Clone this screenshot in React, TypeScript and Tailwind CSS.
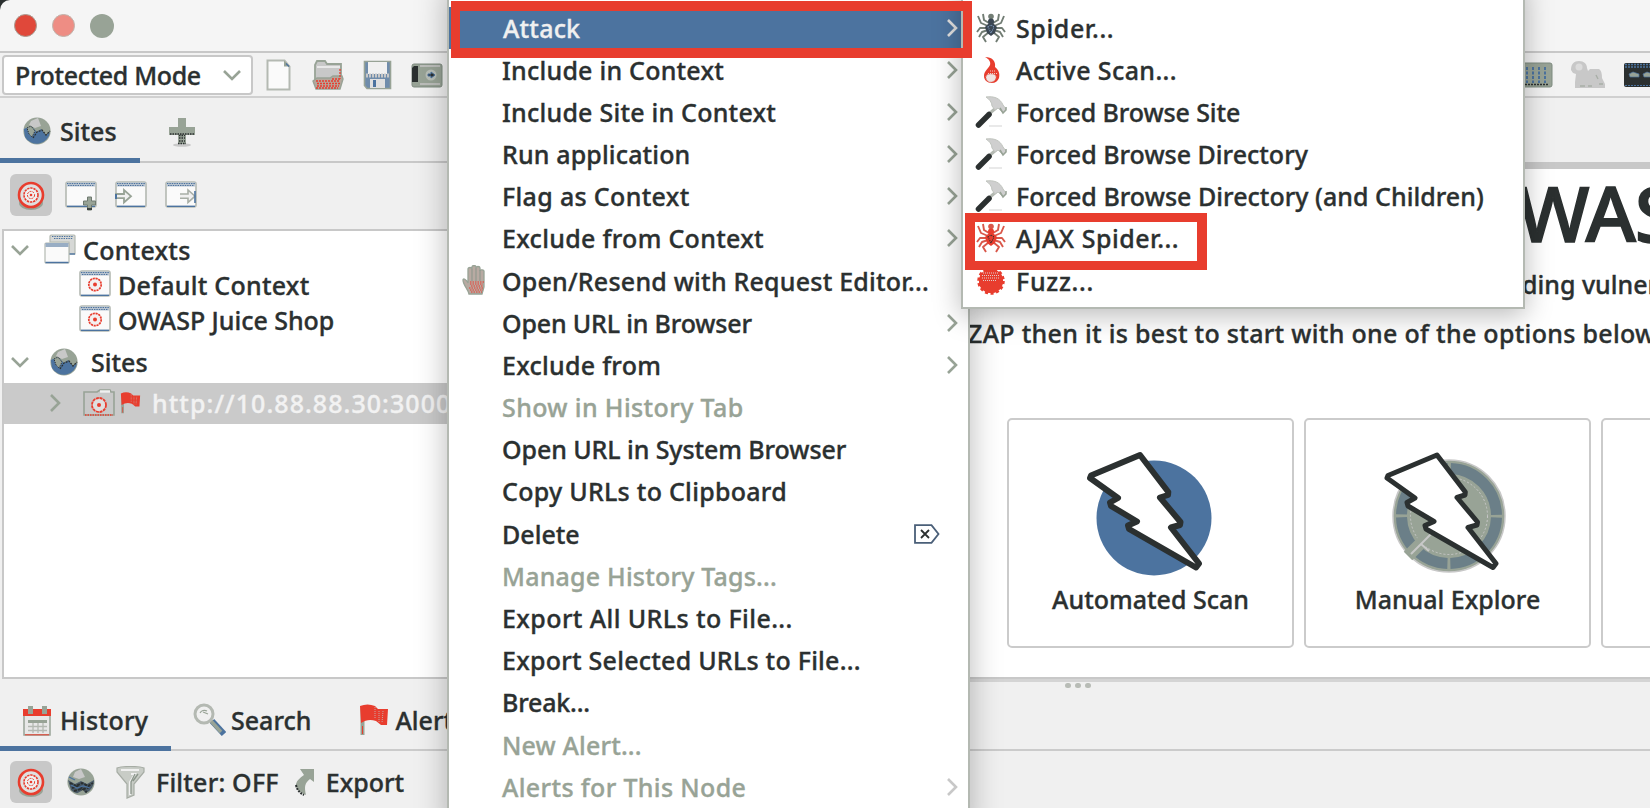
import React from "react";

type IconProps = { className?: string };

const Globe = ({ className = "" }: IconProps) => (
  <svg viewBox="0 0 28 28" className={`h-7 w-7 shrink-0 ${className}`}>
    <circle cx="14" cy="14" r="13.6" fill="#98a396" />
    <path d="M0.8 12 L8 9 L14 15 L18 12 L23 18 L27 15 A13.4 13.4 0 0 1 2 20Z" fill="#4c739f" />
    <path d="M8 4 L15 1 L18 9 L12 11 L6 8Z" fill="#c8c8c8" />
    <path d="M4 11 L8 9 L12 14 L9 20 L6 17Z" fill="#98a396" stroke="#2b3030" strokeWidth="1" strokeDasharray="1 1" />
    <path d="M10 21 L14 15 L19 13 L23 18 L27 14" fill="none" stroke="#2b3030" strokeWidth="1.3" strokeDasharray="2 1" />
  </svg>
);

const DarkGlobe = () => (
  <svg viewBox="0 0 28 28" className="h-7 w-7 shrink-0">
    <circle cx="14" cy="14" r="13.6" fill="#98a396" />
    <path d="M1 12 L8 16 L14 13 L20 16 L27 12 A13.4 13.4 0 0 1 4 22Z" fill="#4a5a68" />
    <path d="M8 4 L14 1 L18 9 L12 11 L6 9Z" fill="#c8c8c8" />
    <path d="M3 15 L9 18 L15 15 L21 18 L26 15 M5 20 L11 18 L17 21 L23 19 M7 23 L14 21 L20 24" fill="none" stroke="#2b3030" strokeWidth="2" strokeDasharray="3 1" />
    <path d="M4 17 L10 20 L16 18 L23 20 M2 9 L8 12" fill="none" stroke="#4c739f" strokeWidth="1.3" />
    <path d="M9 26 L19 26 L16 22Z" fill="#98a396" />
  </svg>
);

const Target = () => (
  <svg viewBox="0 0 42 42" className="h-[42px] w-[42px]">
    <ellipse cx="21" cy="29" rx="12" ry="7" fill="#98a396" />
    <circle cx="21" cy="21" r="12" fill="#e0e0e0" stroke="#e83d2e" strokeWidth="2.6" />
    <circle cx="21" cy="21" r="7" fill="#f0f0f0" stroke="#e83d2e" strokeWidth="1.6" strokeDasharray="2.4 .8" />
    <circle cx="21" cy="21" r="3.6" fill="none" stroke="#e83d2e" strokeWidth="1" strokeDasharray="2 1" />
    <circle cx="21" cy="21" r="1.3" fill="#e83d2e" />
  </svg>
);

const WindowBase = () => (
  <>
    <rect x="1" y="1" width="30" height="25" rx="2" fill="#fafafa" stroke="#b4b9b2" strokeWidth="1.6" />
    <path d="M1.5 1.5h29v4h-29z" fill="#b9c4d0" />
    <path d="M2 2.5h28M3 4.5h26" stroke="#4c739f" strokeWidth="1.2" strokeDasharray="1.4 1" />
    <path d="M2 25.3h28" stroke="#4c739f" strokeWidth="1.4" />
  </>
);

const WindowPlus = () => (
  <svg viewBox="0 0 33 30" className="h-[30px] w-[33px]">
    <WindowBase />
    <path d="M22.5 16h4v4h4v4h-4v5h-4v-5h-4v-4h4z" fill="#98a396" stroke="#6f7a70" strokeWidth="1" />
    <path d="M22 28h5" stroke="#2b3030" strokeWidth="1.6" />
  </svg>
);
const WindowIn = () => (
  <svg viewBox="0 0 33 30" className="h-[30px] w-[33px]">
    <WindowBase />
    <path d="M1 13h8V9l7 6.2-7 6.3v-4.3H1z" fill="#f0f0f0" stroke="#98a396" strokeWidth="1.8" />
    <path d="M1 13v5" stroke="#4c739f" strokeWidth="2" />
  </svg>
);
const WindowOut = () => (
  <svg viewBox="0 0 33 30" className="h-[30px] w-[33px]">
    <WindowBase />
    <path d="M15 13h8V9l7 6.2-7 6.3v-4.3h-8" fill="#f0f0f0" stroke="#a8aea6" strokeWidth="1.6" />
    <path d="M30 10v12" stroke="#4c739f" strokeWidth="1.6" />
  </svg>
);
const WindowTarget = () => (
  <svg viewBox="0 0 32 27" className="h-[27px] w-8 shrink-0">
    <WindowBase />
    <circle cx="16" cy="14.5" r="6.2" fill="#f4f0f0" stroke="#e83d2e" strokeWidth="1.7" strokeDasharray="2.2 .7" />
    <circle cx="16" cy="14.5" r="2" fill="#e83d2e" />
  </svg>
);
const WindowStack = () => (
  <svg viewBox="0 0 32 30" className="h-[30px] w-8 shrink-0">
    <path d="M7 1h23a1 1 0 0 1 1 1v18h-6V8H6V2z" fill="#d6d8d6" stroke="#b4b9b2" strokeWidth="1.2" />
    <path d="M8 2.5h21M10 4.5h19" stroke="#4c739f" strokeWidth="1.2" strokeDasharray="1.4 1" />
    <path d="M25 20h6" stroke="#4c739f" strokeWidth="1.4" />
    <rect x="1" y="9" width="24" height="20" rx="1" fill="#fafafa" stroke="#b4b9b2" strokeWidth="1.2" />
    <path d="M1.5 9h23v4h-23z" fill="#98adc4" />
    <path d="M1.5 28.5h23" stroke="#4c739f" strokeWidth="1.5" />
  </svg>
);
const FolderTarget = () => (
  <svg viewBox="0 0 32 28" className="h-7 w-8 shrink-0">
    <path d="M1 3h13l3-2h10l1 2h3v23H1z" fill="#c8c8c8" stroke="#98a396" strokeWidth="1.6" />
    <path d="M17 2.5h10" stroke="#f0f0f0" strokeWidth="2.4" />
    <path d="M2 26h28" stroke="#e83d2e" strokeWidth="1.4" strokeDasharray="1.5 1" />
    <circle cx="16" cy="16" r="7" fill="#e0e0e0" stroke="#e83d2e" strokeWidth="1.8" strokeDasharray="3 .7" />
    <circle cx="16" cy="16" r="2" fill="#e83d2e" />
  </svg>
);
const Flag = ({ className = "" }: IconProps) => (
  <svg viewBox="0 0 30 32" className={`shrink-0 ${className}`}>
    <path d="M1.5 3v28h4V18z" fill="#98a396" />
    <path d="M3.5 22v8" stroke="#e83d2e" strokeWidth="1" />
    <path d="M1 2 C6 0 11 0 16 2 L19 5 L29 5 L28 21 L22 21 L17 17 C11 15 7 16 2 19Z" fill="#e83d2e" />
    <path d="M20 7v12M24 7l-1 12M16 3v12" stroke="#c8a8a2" strokeWidth="1" strokeDasharray="1 1" />
  </svg>
);
const Chevron = ({ className = "", dir }: IconProps & { dir: "down" | "right" }) => (
  <svg viewBox="0 0 20 20" className={`h-5 w-5 shrink-0 ${className}`} fill="none" stroke="currentColor" strokeWidth="2.6">
    <path d={dir === "down" ? "M2 6l8 8 8-8" : "M6 2l8 8-8 8"} />
  </svg>
);

const DocIcon = () => (
  <svg viewBox="0 0 25 32" className="h-8 w-[25px]">
    <path d="M1.5 1.5h17l5 6v23h-22z" fill="#fafafa" stroke="#b4b9b2" strokeWidth="2" />
    <path d="M18 1.5v6h6z" fill="#98a396" />
    <path d="M20 4.5l3 3" stroke="#4c739f" strokeWidth="1.3" />
  </svg>
);
const FolderIcon = () => (
  <svg viewBox="0 0 32 32" className="h-8 w-8">
    <path d="M3 6l2-4h8l2 3h14v17H3z" fill="#c8c8c8" stroke="#98a396" strokeWidth="1.8" />
    <path d="M5 8h23" stroke="#f0f0f0" strokeWidth="1.6" />
    <path d="M1 22l4-3h13l3-2h9l1 3-3 10H4z" fill="#b5a79c" stroke="#98a396" strokeWidth="1.4" />
    <path d="M4 22h24M5 24.5h23M5 27h22M20 20h8M28 10v10M4 29h22" stroke="#e83d2e" strokeWidth="1.3" strokeDasharray="2 1" />
  </svg>
);
const FloppyIcon = () => (
  <svg viewBox="0 0 29 30" className="h-[30px] w-[29px]">
    <path d="M1.5 1.5h26v27H4l-2.5-3z" fill="#6f8cab" stroke="#98a396" strokeWidth="1.6" />
    <path d="M5 2h19v12H5z" fill="#f0f0f0" />
    <path d="M3 15.500h23" stroke="#c8c8c8" strokeWidth="4" strokeDasharray="2 1" />
    <path d="M7 19h15v9H7z" fill="#e0e0e0" />
    <path d="M10 20h3v7h-3z" fill="#4c739f" />
  </svg>
);
const CameraIcon = () => (
  <svg viewBox="0 0 32 26" className="h-[26px] w-8">
    <rect x="1" y="2" width="30" height="23" rx="2" fill="#98a396" stroke="#7f8b80" />
    <path d="M1 6l2-2h4v16H1z" fill="#2b3030" />
    <path d="M9 4h20M9 22h20" stroke="#c8c8c8" strokeWidth="1.5" />
    <circle cx="20" cy="13" r="5.500" fill="#b9bfb8" />
    <path d="M17 12h3v-2l4 3-4 3v-2h-3z" fill="#2b3030" stroke="#4c739f" strokeWidth="1" />
  </svg>
);
const PlusIcon = () => (
  <svg viewBox="0 0 30 30" className="h-[30px] w-[30px]">
    <ellipse cx="15" cy="28" rx="9" ry="1.8" fill="#c8c8c8" />
    <path d="M11 1h8v9h9v8h-9v9h-8v-9H2v-8h9z" fill="#98a396" />
    <path d="M3 17h24M12 18.5h6M12 21h6M12 24h6M11 26.5h8" stroke="#2b3030" strokeWidth="1.3" strokeDasharray="1.5 1" />
  </svg>
);
const CalendarIcon = () => (
  <svg viewBox="0 0 30 32" className="h-8 w-[30px] shrink-0">
    <path d="M2 11v20h26V11z" fill="#e8e8e8" stroke="#98a396" strokeWidth="1.500" />
    <path d="M1 5h28v7H1z" fill="#e83d2e" />
    <path d="M6 2h5v8H6zM20 2h5v8h-5z" fill="#98a396" />
    <path d="M6 16h19v3H6z" fill="#98a396" />
    <path d="M6 22.5h19M6 26.5h19M11 19v10M16 19v10M21 19v10" stroke="#b4b9b2" strokeWidth="1.3" />
    <path d="M3 30.8h24" stroke="#e83d2e" strokeWidth="1" />
  </svg>
);
const SearchIcon = () => (
  <svg viewBox="0 0 33 33" className="h-[33px] w-[33px] shrink-0">
    <path d="M19 18l12 13" stroke="#4c739f" strokeWidth="6" />
    <path d="M17 17l11 12" stroke="#98a396" strokeWidth="3.5" />
    <circle cx="11" cy="11" r="9" fill="#f0f0f0" stroke="#b4b9b2" strokeWidth="3" />
    <path d="M7 10a5 5 0 0 1 7-2M10 9l5 2" fill="none" stroke="#98a396" strokeWidth="1.2" />
  </svg>
);
const FunnelIcon = () => (
  <svg viewBox="0 0 29 33" className="h-[33px] w-[29px] shrink-0">
    <path d="M1 2c6-2 21-2 27 0v4L18 18v11l-7 3V18L1 6z" fill="#c8ccc6" stroke="#a6aca4" strokeWidth="1.2" />
    <path d="M5 4h18M15 8l4 0-5 8v13" fill="none" stroke="#f0f0f0" strokeWidth="2" />
    <path d="M19 8l-4 8v12M22 8l-5 7" fill="none" stroke="#8a958a" strokeWidth="1.3" />
  </svg>
);
const ExportIcon = () => (
  <svg viewBox="0 0 20 30" className="h-[30px] w-5 shrink-0">
    <path d="M5 2h14v13l-4-3c-5 4-6 7-4 16C4 25 0 21 1 17c1-4 4-6 8-9z" fill="#98a396" />
    <path d="M1 18c1 5 4 8 8 10" fill="none" stroke="#2b3030" strokeWidth="2" strokeDasharray="2 1" />
  </svg>
);
const HandIcon = () => (
  <svg viewBox="0 0 25 31" className="h-[31px] w-[25px]">
    <path d="M7 29c-1-5-6-9-6-14 0-2 3-1 5 3V4c0-2 4-2 4 0V2c0-2 4-2 4 0v1c0-2 4-2 4 0v3c0-2 4-1 4 0v16l-2 7z" fill="#b8aaa2" stroke="#98a396" strokeWidth="1.3" />
    <path d="M10 4v12M14 3v13M18 5v11" stroke="#8a958a" strokeWidth="1" />
    <path d="M8 17h14M8 19h13M9 21h12M7 23h14M8 25h13M9 27h11" stroke="#e83d2e" strokeWidth="1.2" strokeDasharray="1.5 1" />
  </svg>
);
const Spider = ({ body, leg, mark }: { body: string; leg: string; mark: string }) => (
  <svg viewBox="0 0 30 30" className="h-[30px] w-[30px]">
    <g fill="none" stroke={leg} strokeWidth="1.9" strokeLinejoin="round">
      <path d="M13 10L8 7 7 1M17 10l5-3 1-6M12 13L5 10 2 3M18 13l7-3 3-7M12 15l-8 0-3 4M18 15l8 0 3 4M12 17l-6 2-3 5M18 17l6 2 3 5M13 19l-6 5 3 5M17 19l6 5-3 5" />
    </g>
    <circle cx="15" cy="3.5" r="2.8" fill={leg} />
    <ellipse cx="15" cy="8.5" rx="3" ry="3" fill={body} />
    <path d="M15 8l6 6-2 6-4 3-4-3-2-6z" fill={body} />
    <path d="M12 14l3-2 3 2-3 6z" fill="none" stroke={mark} strokeWidth="1.1" strokeDasharray="1 1" />
  </svg>
);
const Flame = () => (
  <svg viewBox="0 0 18 28" className="h-7 w-[18px]">
    <path d="M3 1c7 0 11 4 10 10 4 3 5 7 4 11-1 3-4 5-7 5-5 0-8-3-8-7 0-5 4-7 6-11 1-3-1-6-5-8z" fill="#e83d2e" />
    <path d="M4 21c0-2 2-3 5-3s5 1 5 3-2 5-5 5-5-2-5-5z" fill="#f0e4e2" stroke="#d9a098" strokeWidth="1" strokeDasharray="1 1" />
    <path d="M8 15h6M6 17.500h9" stroke="#f0c8c2" strokeWidth="1" strokeDasharray="1 1" />
  </svg>
);
const HammerIcon = () => (
  <svg viewBox="0 0 32 32" className="h-8 w-8">
    <path d="M14 30h13" stroke="#e4e4e4" strokeWidth="1.6" />
    <path d="M14 18l8-7" stroke="#b4b9b2" strokeWidth="3" />
    <path d="M3.5 29L14 18.500" stroke="#2b3030" strokeWidth="5.500" strokeLinecap="round" />
    <path d="M11 1c8-1 14 1 17 8l3 4-3 4-5-5-3 2-3-4c0-4-3-7-6-9z" fill="#cfcfcf" stroke="#c0c4be" />
    <path d="M25 12l3 5 3-3v-3" fill="none" stroke="#98a396" strokeWidth="1.5" />
  </svg>
);
const FuzzIcon = () => (
  <svg viewBox="0 0 30 30" className="h-[30px] w-[30px]">
    <circle cx="15" cy="15" r="12" fill="#e83d2e" stroke="#e83d2e" strokeWidth="3.5" strokeDasharray="3 2.4" />
    <circle cx="15" cy="15" r="12" fill="#e83d2e" />
    <path d="M7 7h16M6 9.5h18M6 12h17M7 14.5h14" stroke="#e0cfcb" strokeWidth="1" strokeDasharray="1 1" />
  </svg>
);
const DeleteKey = () => (
  <svg viewBox="0 0 26 20" className="h-5 w-[26px]" fill="none" stroke="#4a5f78" strokeWidth="1.8">
    <path d="M1 1.2h16.5l7 8.8-7 8.8H1z" />
    <path d="M7 6l8 8M15 6l-8 8" stroke="#2b3030" />
  </svg>
);
const BoardIcon = () => (
  <svg viewBox="0 0 28 26" className="h-[26px] w-7">
    <rect x="-6" y="1" width="33" height="24" rx="2" fill="#98a396" stroke="#7f8b80" />
    <path d="M2 5v16M8 5v16M14 5v16M20 5v16" stroke="#4c739f" strokeWidth="2" strokeDasharray="3 1.5" />
    <path d="M0 22.5h24" stroke="#2b3030" strokeWidth="1.4" strokeDasharray="2 1" />
  </svg>
);
const CritterIcon = () => (
  <svg viewBox="0 0 36 29" className="h-[29px] w-9">
    <path d="M1 10c0-6 3-9 8-9s8 3 8 7l1 3 2-2h9c2 1 3 4 3 9l3 6v4H5v-6l1-8-3-1z" fill="#c8c8c8" />
    <circle cx="9" cy="7" r="3.5" fill="#dcdcdc" />
    <path d="M10 26h5M18 26h4M26 15l2 4M29 24h4" stroke="#a8aea6" strokeWidth="1.4" />
  </svg>
);
const MaskIcon = () => (
  <svg viewBox="0 0 32 26" className="h-[26px] w-8 shrink-0">
    <rect x="1" y="1" width="36" height="24" rx="2" fill="#2b3030" />
    <path d="M2 2.5h30M2 5h30" stroke="#4c739f" strokeWidth="1.6" strokeDasharray="2 1" />
    <path d="M2 23.5h30" stroke="#4c739f" strokeWidth="1" strokeDasharray="2 1" />
    <path d="M6 12l4-2 6 2v3H7zM20 12l4-2 6 2v3h-9z" fill="#98a396" stroke="#4c739f" strokeWidth=".7" />
  </svg>
);

const Bolt = ({ width }: { width: number }) => (
  <path
    d="M-11 -61 L-60 -40.500 L-61 -38 L-33 -18 L-41 -13.500 L-40 -10 L-14 5.500 L-23 9.500 L-22 13 L45 51.500 L48 47.500 L20 11.500 L29 9 L29.500 6 L9 -18.500 L17 -21 L17.300 -24 Z"
    fill="#fff"
    stroke="#2b3030"
    strokeWidth={width}
    strokeLinejoin="round"
  />
);

type Item = {
  label: string;
  track?: string;
  sub?: boolean;
  off?: boolean;
  icon?: React.ReactNode;
  end?: React.ReactNode;
};

const MENU: Item[] = [
  { label: "Include in Context", sub: true, track: "tracking-[0.23px]" },
  { label: "Include Site in Context", sub: true, track: "tracking-[0.23px]" },
  { label: "Run application", sub: true, track: "tracking-[0.14px]" },
  { label: "Flag as Context", sub: true, track: "tracking-[0.33px]" },
  { label: "Exclude from Context", sub: true, track: "tracking-[0.3px]" },
  { label: "Open/Resend with Request Editor...", icon: <HandIcon />, track: "tracking-[0.22px]" },
  { label: "Open URL in Browser", sub: true, track: "tracking-[-0.17px]" },
  { label: "Exclude from", sub: true, track: "tracking-[0.26px]" },
  { label: "Show in History Tab", off: true, track: "tracking-[0.38px]" },
  { label: "Open URL in System Browser", track: "tracking-[-0.08px]" },
  { label: "Copy URLs to Clipboard", track: "tracking-[0.27px]" },
  { label: "Delete", end: <DeleteKey /> },
  { label: "Manage History Tags...", off: true, track: "tracking-[0.2px]" },
  { label: "Export All URLs to File...", track: "tracking-[0.4px]" },
  { label: "Export Selected URLs to File...", track: "tracking-[0.24px]" },
  { label: "Break...", track: "tracking-[-0.2px]" },
  { label: "New Alert...", off: true, track: "tracking-[0.15px]" },
  { label: "Alerts for This Node", off: true, sub: true, track: "tracking-[0.35px]" },
];

const SUBMENU: Item[] = [
  { label: "Spider...", icon: <Spider body="#3a4652" leg="#727d74" mark="#7f9cc0" />, track: "tracking-[0.6px]" },
  { label: "Active Scan...", icon: <Flame />, track: "tracking-[0.4px]" },
  { label: "Forced Browse Site", icon: <HammerIcon />, track: "tracking-[-0.1px]" },
  { label: "Forced Browse Directory", icon: <HammerIcon /> },
  { label: "Forced Browse Directory (and Children)", icon: <HammerIcon />, track: "tracking-[0.03px]" },
  { label: "AJAX Spider...", icon: <Spider body="#e83d2e" leg="#d9584b" mark="#2b3030" />, track: "tracking-[0.52px]" },
  { label: "Fuzz...", icon: <FuzzIcon />, track: "tracking-[0.7px]" },
];

function TopBars() {
  return (
    <>
      <header className="flex h-[53px] shrink-0 items-center gap-[15px] rounded-tl-[10px] border-b-2 border-[#c8c8c8] bg-[#f5f5f5] pl-[14px]">
        <span className="h-[23px] w-[23px] rounded-full border border-[#a89c92] bg-[#e0483a]" />
        <span className="h-[23px] w-[23px] rounded-full border border-[#c0b4ac] bg-[#ee8d84]" />
        <span className="h-6 w-6 rounded-full bg-[#98a396]" />
      </header>
      <div className="flex h-[45px] shrink-0 items-center border-b-2 border-[#d0d0d0] bg-[#f2f2f2] pl-[2px]">
        <div className="flex h-10 w-[251px] items-center justify-between rounded-[4px] border-2 border-[#c8c8c8] bg-white pr-[9px] pl-[11px]">
          <span className="tracking-[-0.36px]">Protected Mode</span>
          <Chevron dir="down" className="text-[#98a396]" />
        </div>
        <div className="flex items-center pl-[13px]">
          <DocIcon />
          <div className="pl-[21px]"><FolderIcon /></div>
          <div className="pl-[19px]"><FloppyIcon /></div>
          <div className="pl-[19px]"><CameraIcon /></div>
        </div>
        <div className="ml-auto flex items-center">
          <BoardIcon />
          <div className="pl-[17px]"><CritterIcon /></div>
          <div className="w-[44px] overflow-hidden pl-[17px]"><MaskIcon /></div>
        </div>
      </div>
    </>
  );
}

function SitesPanel() {
  return (
    <section className="flex w-[460px] shrink-0 flex-col bg-[#f0f0f0]">
      <div className="flex h-[65px] border-b-2 border-[#c8c8c8]">
        <div className="flex h-[65px] w-[140px] items-center gap-[9px] border-b-[5px] border-[#4c739f] pt-[6px] pl-[23px]">
          <Globe />
          <span>Sites</span>
        </div>
        <div className="flex items-center pt-1 pl-[27px]"><PlusIcon /></div>
      </div>
      <div className="flex h-[66px] items-center pb-[3px] pl-[10px]">
        <div className="rounded-[6px] bg-[#c8c8c8]"><Target /></div>
        <div className="pt-[2px] pl-[13px]"><WindowPlus /></div>
        <div className="pt-[2px] pl-[17px]"><WindowIn /></div>
        <div className="pt-[2px] pl-[17px]"><WindowOut /></div>
      </div>
      <div className="ml-[2px] flex h-[450px] flex-col border-2 border-[#c8c8c8] bg-white">
        <div className="flex h-9 items-center pt-[2px] pl-[6px]">
          <Chevron dir="down" className="text-[#98a396]" />
          <div className="pr-[7px] pb-[2px] pl-[14px]"><WindowStack /></div>
          <span className="tracking-[0.25px]">Contexts</span>
        </div>
        <div className="flex h-[35px] items-center gap-[7px] pl-[75px]">
          <div className="pb-[2px]"><WindowTarget /></div>
          <span className="tracking-[0.25px]">Default Context</span>
        </div>
        <div className="flex h-[35px] items-center gap-[7px] pl-[75px]">
          <div className="pb-[2px]"><WindowTarget /></div>
          <span className="tracking-[-0.03px]">OWASP Juice Shop</span>
        </div>
        <div className="flex h-[46px] items-center pt-[3px] pl-[6px]">
          <Chevron dir="down" className="text-[#98a396]" />
          <div className="pr-[13px] pl-[20px]"><Globe /></div>
          <span>Sites</span>
        </div>
        <div className="flex h-[41px] items-center overflow-hidden bg-[#cacaca] pb-[2px] pl-[41px]">
          <Chevron dir="right" className="text-[#98a396]" />
          <div className="pr-[5px] pl-[18px]"><FolderTarget /></div>
          <Flag className="h-[22px] w-[21px]" />
          <span className="pl-[11px] tracking-[1.05px] whitespace-nowrap text-[#f2f2f2]">http://10.88.88.30:3000</span>
        </div>
      </div>
    </section>
  );
}

function Card({ label, children }: { label?: string; children?: React.ReactNode }) {
  return (
    <div className="flex h-[230px] w-[287px] shrink-0 flex-col items-center rounded-[5px] border-2 border-[#cbcbcb] bg-white pt-[26px]">
      {children}
      <span className="-mt-[4px] whitespace-nowrap">{label}</span>
    </div>
  );
}

function QuickStart() {
  return (
    <section className="flex min-w-0 flex-1 flex-col overflow-hidden bg-[#c8c8c8]">
      <div className="h-[71px] shrink-0 border-b-[7px] border-[#c8c8c8] bg-[#f0f0f0]" />
      <div className="flex h-[508px] shrink-0 flex-col bg-white">
        <h1 className="-mt-[2px] flex h-[92px] items-center justify-end overflow-hidden text-[77px] leading-[92px] font-medium whitespace-nowrap [-webkit-text-stroke:1.500px]">
          <span className="w-[133px] tracking-[-1px]">WAS</span>
        </h1>
        <div className="flex h-[49px] items-center justify-end">
          <span className="w-[128px] whitespace-nowrap">ding vulner</span>
        </div>
        <div className="flex h-[50px] items-center pl-[508px]">
          <span className="tracking-[0.3px] whitespace-nowrap">ZAP then it is best to start with one of the options below</span>
        </div>
        <div className="flex gap-[10px] pt-[60px] pl-[547px]">
          <Card label="Automated Scan">
            <svg viewBox="-70 -70 140 140" className="h-[140px] w-[140px] shrink-0">
              <circle cx="3" cy="2" r="57.5" fill="#4c739f" />
              <Bolt width={6} />
            </svg>
          </Card>
          <Card label="Manual Explore">
            <svg viewBox="-70 -70 140 140" className="h-[140px] w-[140px] shrink-0">
              <circle cx="1" cy="0" r="56" fill="#98a396" stroke="#c8c8c8" strokeWidth="1.500" />
              <circle cx="1" cy="0" r="47.500" fill="none" stroke="#6b7f88" strokeWidth="11" strokeDasharray="71.600 3" strokeDashoffset="-1.5" />
              <circle cx="1" cy="0" r="38.500" fill="none" stroke="#c8c8c8" strokeWidth="1" strokeDasharray="2 2" />
              <path d="M-40 40l18-18" stroke="#98a396" strokeWidth="12" />
              <path d="M-37 38l24-24M-27 28l8 7" stroke="#c8c8c8" strokeWidth="2" />
              <Bolt width={5} />
            </svg>
          </Card>
          <Card />
        </div>
      </div>
    </section>
  );
}

function BottomPanel() {
  return (
    <section className="flex flex-1 flex-col bg-[#f0f0f0]">
      <div className="flex h-[3px]">
        <div className="w-[460px]" />
        <div className="flex-1 bg-[#d4d4d4]" />
      </div>
      <div className="flex h-[69px] border-b-2 border-[#cbcbcb]">
        <div className="flex h-[69px] w-[171px] items-center gap-[8px] border-b-[5px] border-[#4c739f] pt-[11px] pl-[22px]">
          <CalendarIcon /><span className="tracking-[0.3px]">History</span>
        </div>
        <div className="flex items-center gap-[5px] pt-[8px] pl-[22px]">
          <SearchIcon /><span>Search</span>
        </div>
        <div className="flex items-center gap-[6px] pt-[8px] pl-[48px]">
          <Flag className="h-8 w-[30px]" /><span>Alerts</span>
        </div>
        <div className="flex h-[6px] items-end gap-1 self-start pl-[600px]">
          <span className="h-[5px] w-[6px] rounded-full bg-[#b8bcb6]" />
          <span className="h-[5px] w-[6px] rounded-full bg-[#b8bcb6]" />
          <span className="h-[5px] w-[6px] rounded-full bg-[#b8bcb6]" />
        </div>
      </div>
      <div className="flex flex-1 items-center pt-[5px] pl-[10px]">
        <div className="rounded-[6px] bg-[#c8c8c8]"><Target /></div>
        <div className="pl-[15px]"><DarkGlobe /></div>
        <div className="pl-[21px]"><FunnelIcon /></div>
        <span className="pl-[11px] tracking-[0.2px] whitespace-nowrap">Filter: OFF</span>
        <div className="pl-[16px]"><ExportIcon /></div>
        <span className="pl-[11px]">Export</span>
      </div>
    </section>
  );
}

function MenuRow({ item }: { item: Item }) {
  return (
    <div className={`flex h-[42.18px] shrink-0 items-center ${item.off ? "text-[#98a396]" : ""}`}>
      <div className="w-[53px] shrink-0 pl-[13px]">{item.icon}</div>
      <span className={`whitespace-nowrap ${item.track ?? ""}`}>{item.label}</span>
      {item.sub && <Chevron dir="right" className={`mr-[6px] ml-auto ${item.off ? "text-[#c8c8c8]" : "text-[#98a396]"}`} />}
      {item.end && <div className="mr-[28px] ml-auto">{item.end}</div>}
    </div>
  );
}

export default function App() {
  return (
    <div className="relative h-[808px] w-[1650px] overflow-hidden bg-[#2b3030] font-['Noto_Sans','Open_Sans',sans-serif] text-[25px] leading-[34px] font-medium text-[#2b3030] [-webkit-text-stroke:0.35px]">
      <div className="flex h-[808px] flex-col">
        <TopBars />
        <div className="flex h-[581px] shrink-0">
          <SitesPanel />
          <QuickStart />
        </div>
        <BottomPanel />
      </div>

      <div className="absolute top-[-20px] left-[447px] flex h-[850px] w-[523px] flex-col border-x-2 border-[#b4b9b2] bg-white pt-[26.5px] shadow-[0_6px_30px_rgba(0,0,0,0.28)]">
        <div className="flex h-[42.18px] shrink-0 items-center bg-[#4c739f] pl-[54px] text-[#f0f0f0]">
          <span className="tracking-[0.2px]">Attack</span>
          <Chevron dir="right" className="mr-[6px] ml-auto text-[#e0e0e0]" />
        </div>
        {MENU.map((item) => <MenuRow key={item.label} item={item} />)}
      </div>

      <div className="absolute top-[-20px] left-[961px] flex h-[329px] w-[564px] flex-col border-2 border-[#b4b9b2] bg-white pt-[24.5px] shadow-[0_6px_26px_rgba(0,0,0,0.28)]">
        {SUBMENU.map((item) => (
          <div key={item.label} className="flex h-[42.18px] shrink-0 items-center">
            <div className="ml-[9px] flex w-[37px] shrink-0 justify-center">{item.icon}</div>
            <span className={`pl-[7px] whitespace-nowrap ${item.track ?? ""}`}>{item.label}</span>
          </div>
        ))}
      </div>

      <div className="absolute top-[1px] left-[451px] h-[57px] w-[521px] border-x-[9px] border-y-[10px] border-[#e83d2e]" />
      <div className="absolute top-[213px] left-[965px] h-[57px] w-[242px] border-x-[10px] border-y-[9.5px] border-[#e83d2e]" />
    </div>
  );
}
